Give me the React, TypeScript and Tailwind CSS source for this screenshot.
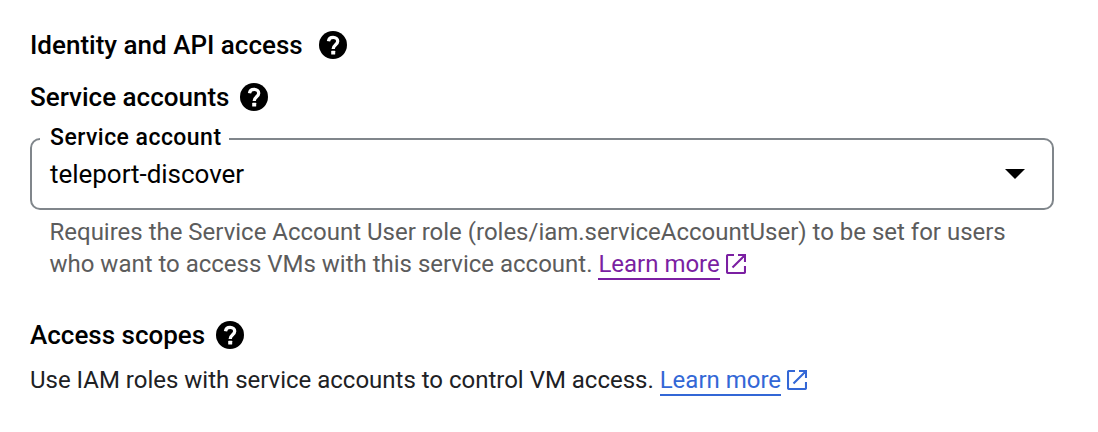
import React from "react";

function HelpIcon() {
  return (
    <svg viewBox="0 0 28 28" className="size-7 shrink-0">
      <circle cx="14" cy="14" r="14" fill="currentColor" />
      <path d="M9.5 10.2C9.8 7.6 11.6 6.3 14.1 6.3c2.7 0 4.6 1.6 4.6 4 0 3.3-4.5 3.6-4.5 7.6" fill="none" stroke="white" strokeWidth="3.3" />
      <rect x="12.2" y="19.7" width="4" height="3.8" rx="0.6" fill="white" />
    </svg>
  );
}

function ExternalIcon() {
  return (
    <svg viewBox="0 0 20 20" className="size-5 shrink-0" fill="none" stroke="currentColor" strokeWidth="2.1">
      <path d="M8 1H2.2Q1 1 1 2.2v15.6Q1 19 2.2 19h15.6q1.2 0 1.2-1.2V12M12 1h7v7M18.6 1.4L6.5 13.5" />
    </svg>
  );
}

function Heading({ text, gap }: { text: string; gap: string }) {
  return (
    <h2 className={`flex h-[34px] items-center text-[26px] leading-[34px] font-medium text-black ${gap}`}>
      <span className="whitespace-nowrap">{text}</span>
      <HelpIcon />
    </h2>
  );
}

function LearnMore({ color }: { color: string }) {
  return (
    <a href="#" className={`inline-flex items-center gap-[6px] align-top ${color}`}>
      <span className="h-8 border-b-2 border-current leading-8">Learn more</span>
      <ExternalIcon />
    </a>
  );
}

export default function App() {
  return (
    <main className="h-[432px] w-[1098px] bg-white pt-7 pl-[30px] font-[Roboto,sans-serif]">
      <Heading text="Identity and API access" gap="gap-[16px]" />
      <div className="h-[18px]" />
      <Heading text="Service accounts" gap="gap-[11px]" />
      <fieldset className="mt-[10px] h-[86px] w-[1024px] rounded-[10px] border-2 border-[#80868b] px-[8px]">
        <legend className="h-[30px] pr-[7px] pl-[10px] text-[23px] leading-7 font-medium tracking-[0.46px] text-black">
          Service account
        </legend>
        <div className="flex h-[40px] items-center justify-between pr-[19px] pl-[10px]">
          <span className="text-[26px] tracking-[-0.03px] text-black">teleport-discover</span>
          <svg viewBox="0 0 20 10" className="h-[10px] w-5">
            <path d="M0 0h20L10 10z" fill="black" />
          </svg>
        </div>
      </fieldset>
      <p className="mt-[6px] ml-[19.5px] text-[24px] leading-8 tracking-[-0.008px] whitespace-nowrap text-[#5c5c5c]">
        Requires the Service Account User role (roles/iam.serviceAccountUser) to be set for users
        <br />
        who want to access VMs with this service account. <LearnMore color="text-[#7b1fa2]" />
      </p>
      <div className="h-[38px]" />
      <Heading text="Access scopes" gap="gap-[11px]" />
      <p className="mt-[12px] text-[24px] leading-8 tracking-[-0.008px] whitespace-nowrap text-[#202124]">
        Use IAM roles with service accounts to control VM access. <LearnMore color="text-[#3367d6]" />
      </p>
    </main>
  );
}
